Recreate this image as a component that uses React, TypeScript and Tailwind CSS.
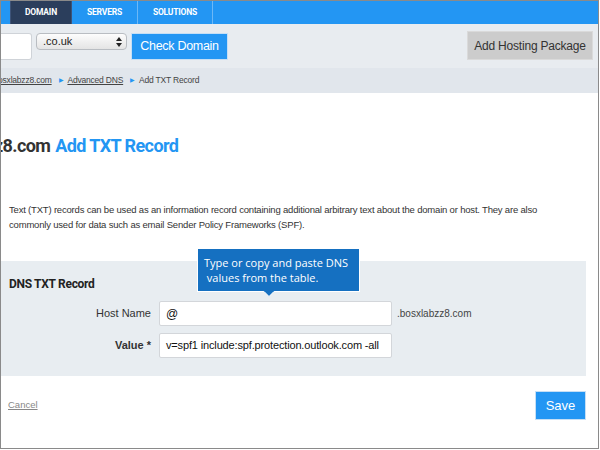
import React from "react";

export default function App() {
  return (
    <div className="w-[600px] h-[450px] bg-white overflow-hidden font-['Liberation_Sans',Arial,sans-serif]">
      <div className="w-[599px] h-[449px] border border-[#8a8a8a] bg-white flex flex-col overflow-hidden">
        {/* nav */}
        <div className="h-[23px] bg-[#2396f3] flex pl-[9px] shrink-0 font-[Roboto,sans-serif] text-white text-[8.5px] font-bold tracking-[-0.2px]">
          <div className="w-[62px] bg-[#2b3e5c] border-x border-[#3d5378] flex items-center justify-center">DOMAIN</div>
          <div className="w-[66px] border-r border-[#6db8f6] flex items-center justify-center">SERVERS</div>
          <div className="w-[75px] border-r border-[#6db8f6] flex items-center justify-center">SOLUTIONS</div>
        </div>
        {/* search row */}
        <div className="h-[44px] bg-[#e8ecf0] flex items-start pt-[9px] shrink-0">
          <div className="w-[31px] h-[27px] bg-white border border-[#cfd3d8] border-l-0 rounded-r-[3px]" />
          <div className="ml-[4px] w-[91px] h-[17px] rounded-[4px] border border-[#b9bdc2] bg-gradient-to-b from-[#fdfdfd] to-[#e4e4e4] flex items-center justify-between pl-[6px] pr-[4px] text-[11px] text-[#222]">
            <span>.co.uk</span>
            <svg width="6" height="10" viewBox="0 0 6 10"><path d="M3 0 L6 4 L0 4 Z M3 10 L6 6 L0 6 Z" fill="#222" /></svg>
          </div>
          <div className="ml-[4px] w-[97px] h-[27px] bg-[#2396f3] border border-[#c6dff5] flex items-center justify-center text-white text-[12.5px] tracking-[-0.3px] whitespace-nowrap">Check Domain</div>
          <div className="flex-1" />
          <div className="mt-[-2px] mr-[5px] w-[126px] h-[29px] bg-[#cccccc] border border-[#dadada] flex items-center justify-center text-[#333] text-[12px] tracking-[-0.2px] whitespace-nowrap">Add Hosting Package</div>
        </div>
        {/* breadcrumb */}
        <div className="h-[25px] bg-[#e1e6ec] flex items-center text-[8.5px] tracking-[-0.2px] text-[#444] shrink-0 whitespace-nowrap">
          <span className="underline -ml-[3px]">osxlabzz8.com</span>
          <span className="text-[#2396f3] text-[6px] ml-[7px] mr-[4px]">▶</span>
          <span className="underline">Advanced DNS</span>
          <span className="text-[#2396f3] text-[6px] ml-[7px] mr-[4px]">▶</span>
          <span>Add TXT Record</span>
        </div>
        {/* heading */}
        <div className="mt-[40px] h-[24px] flex items-center text-[18px] font-bold tracking-[-0.6px] whitespace-nowrap font-[Roboto,sans-serif]">
          <span className="text-[#333] -ml-[7px]">z8.com</span>
          <span className="text-[#2396f3] ml-[5px]">Add TXT Record</span>
        </div>
        {/* paragraph */}
        <div className="mt-[45px] ml-[8px] text-[9.5px] tracking-[-0.19px] leading-[15px] text-[#333] whitespace-nowrap">
          Text (TXT) records can be used as an information record containing additional arbitrary text about the domain or host. They are also<br />
          commonly used for data such as email Sender Policy Frameworks (SPF).
        </div>
        {/* DNS section */}
        <div className="mt-[29px] w-[585px] h-[115px] bg-[#e8edf1] relative shrink-0">
          <div className="absolute left-[196px] top-[-13px] w-[163px] h-[44px] bg-[#1570c1] border border-white text-white text-[11px] leading-[15px] pl-[6px] pt-[6px] whitespace-nowrap font-['Open_Sans',sans-serif]">
            Type or copy and paste DNS<br />&nbsp;values from the table.
            <svg className="absolute left-[65px] top-[42px]" width="12" height="7" viewBox="0 0 12 7">
              <path d="M0.5 0 L6 5.5 L11.5 0" fill="#1570c1" stroke="white" strokeWidth="1" />
              <rect x="1.2" y="-1" width="9.6" height="1.6" fill="#1570c1" />
            </svg>
          </div>
          <div className="pt-[16px] pl-[8px] text-[12px] leading-[14px] font-bold text-[#222] tracking-[-0.3px] font-[Roboto,sans-serif]">DNS TXT Record</div>
          <div className="mt-[10px] flex items-center">
            <div className="w-[150px] text-right text-[11px] text-[#333]">Host Name</div>
            <div className="ml-[8px] w-[233px] h-[25px] bg-white border border-[#d3d6da] rounded-[2px] flex items-center pl-[6px] text-[12px] text-[#111]">@</div>
            <div className="ml-[5px] text-[10px] text-[#444]">.bosxlabzz8.com</div>
          </div>
          <div className="mt-[7px] flex items-center">
            <div className="w-[150px] text-right text-[11px] font-bold text-[#333]">Value *</div>
            <div className="ml-[8px] w-[233px] h-[25px] bg-white border border-[#d3d6da] rounded-[2px] flex items-center pl-[6px] text-[11px] tracking-[-0.15px] text-[#111] whitespace-nowrap">v=spf1 include:spf.protection.outlook.com -all</div>
          </div>
        </div>
        {/* footer */}
        <div className="mt-[15px] w-[585px] flex items-center justify-between">
          <span className="ml-[7px] text-[9.5px] text-[#888] underline">Cancel</span>
          <div className="w-[51px] h-[29px] bg-[#2396f3] border border-[#c6dff5] flex items-center justify-center text-white text-[13px]">Save</div>
        </div>
      </div>
    </div>
  );
}
